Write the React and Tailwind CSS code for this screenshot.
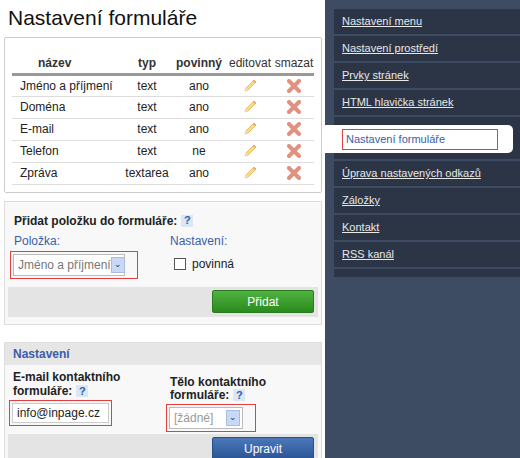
import React from "react";

const rows = [
  ["Jméno a příjmení", "text", "ano"],
  ["Doména", "text", "ano"],
  ["E-mail", "text", "ano"],
  ["Telefon", "text", "ne"],
  ["Zpráva", "textarea", "ano"],
];

const menu = ["Nastavení menu", "Nastavení prostředí", "Prvky stránek", "HTML hlavička stránek"];
const menu2 = ["Úprava nastavených odkazů", "Záložky", "Kontakt", "RSS kanál"];

function Pencil() {
  return (
    <svg width="16" height="16" viewBox="0 0 16 16">
      <path d="M3 13 L4 10 L12 2 L14 4 L6 12 Z" fill="#f7dc8a" stroke="#e0b050" strokeWidth="0.8" />
      <path d="M12 2 L14 4 L13 5 L11 3 Z" fill="#f0a070" />
      <path d="M3 13 L4 10 L6 12 Z" fill="#f3e6c8" />
    </svg>
  );
}

function Cross() {
  return (
    <svg width="14" height="14" viewBox="0 0 14 14">
      <path d="M2 2 L12 12 M12 2 L2 12" stroke="#e0917f" strokeWidth="4" strokeLinecap="round" />
    </svg>
  );
}

function Help() {
  return (
    <span className="inline-flex items-center justify-center w-[12px] h-[12px] bg-[#dde6f3] text-[#2b5fb4] text-[11px] font-bold ml-1 leading-none">?</span>
  );
}

function Select({ value, w, muted }) {
  return (
    <div className={`flex items-center justify-between bg-white border border-[#bbb] h-[22px] pl-1 pr-[2px] ${w}`}>
      <span className={`text-[12px] whitespace-nowrap ${muted ? "text-[#999]" : "text-[#777]"}`}>{value}</span>
      <span className="w-[14px] h-[16px] shrink-0 bg-[#c8d8f5] border border-[#a8bce0] flex items-center justify-center text-[#333] text-[9px]">⌄</span>
    </div>
  );
}

export default function App() {
  return (
    <div className="w-[520px] h-[458px] flex bg-white overflow-hidden" style={{ fontFamily: "'Liberation Sans', Arial, sans-serif" }}>
      <div className="w-[325px] shrink-0 pl-[4px] pr-[3px]">
        <h1 className="text-[21px] text-[#111] pl-[4px] pt-[5px] h-[37px] leading-[26px]">Nastavení formuláře</h1>

        <div className="border border-[#ccc] rounded-[2px] px-[7px] pt-[16px] pb-[7px]">
          <table className="w-full text-[12px] text-[#222]">
            <thead>
              <tr className="border-b-[3px] border-[#999] h-[20px]">
                <th className="font-bold text-[#333] text-left pl-[26px] w-[110px]">název</th>
                <th className="font-bold text-[#333] w-[50px]">typ</th>
                <th className="font-bold text-[#333] w-[54px]">povinný</th>
                <th className="font-normal text-[#333] w-[48px]">editovat</th>
                <th className="font-normal text-[#333]">smazat</th>
              </tr>
            </thead>
            <tbody>
              {rows.map((r) => (
                <tr key={r[0]} className="border-b border-[#ddd] h-[22px]">
                  <td className="pl-[8px] whitespace-nowrap">{r[0]}</td>
                  <td className="text-center">{r[1]}</td>
                  <td className="text-center">{r[2]}</td>
                  <td><div className="flex justify-center"><Pencil /></div></td>
                  <td><div className="flex justify-center"><Cross /></div></td>
                </tr>
              ))}
            </tbody>
          </table>
        </div>

        <div className="mt-[8px] border border-[#ddd] bg-[#f8f8f8] px-[3px] pt-[10px] pb-[7px]">
          <div className="text-[12px] font-bold text-[#222] pl-[6px] flex items-center">Přidat položku do formuláře:<Help /></div>
          <div className="flex mt-[2px]">
            <div className="w-[162px] pl-[6px]">
              <div className="text-[12px] text-[#3a5da8]">Položka:</div>
              <div className="mt-[1px] -ml-[4px] border border-[#e04040] w-[128px] p-[2px]">
                <Select value="Jméno a příjmení" w="w-[112px]" />
              </div>
            </div>
            <div>
              <div className="text-[12px] text-[#3a5da8]">Nastavení:</div>
              <div className="flex items-center gap-[6px] mt-[5px] ml-[4px]">
                <span className="w-[12px] h-[12px] border border-[#555] bg-white" />
                <span className="text-[12px] text-[#222]">povinná</span>
              </div>
            </div>
          </div>
          <div className="mt-[8px] bg-[#e4e4e4] h-[30px] flex justify-end items-center pr-[4px]">
            <button className="w-[102px] h-[23px] rounded-[2px] bg-gradient-to-b from-[#4fb240] to-[#2a8a1c] text-white text-[12px] border border-[#2a7a20]">Přidat</button>
          </div>
        </div>

        <div className="mt-[17px] border border-[#ddd] bg-[#f8f8f8] px-[3px] pb-[7px]">
          <div className="-mx-[3px] bg-[#e6e6e6] h-[22px] flex items-center pl-[8px] text-[12px] font-bold text-[#3a5da8]">Nastavení</div>
          <div className="flex mt-[5px]">
            <div className="w-[162px] pl-[5px]">
              <div className="text-[12px] font-bold text-[#222] leading-[14px]">E-mail kontaktního<br />formuláře:<Help /></div>
              <div className="mt-[2px] -ml-[4px] border border-[#e04040] w-[103px] p-[2px]">
                <div className="bg-white border border-[#ccc] h-[20px] pl-[4px] text-[12px] text-[#222] leading-[18px]">info@inpage.cz</div>
              </div>
            </div>
            <div className="pt-[6px]">
              <div className="text-[12px] font-bold text-[#222] leading-[13px]">Tělo kontaktního<br />formuláře:<Help /></div>
              <div className="mt-[2px] -ml-[4px] border border-[#e04040] w-[90px] p-[2px]">
                <Select value="[žádné]" w="w-[74px]" muted />
              </div>
            </div>
          </div>
          <div className="mt-[2px] bg-[#e4e4e4] h-[30px] flex justify-end items-center pr-[4px]">
            <button className="w-[102px] h-[23px] rounded-[2px] bg-gradient-to-b from-[#4a78b8] to-[#2a5597] text-white text-[12px] border border-[#2a4f88]">Upravit</button>
          </div>
        </div>
      </div>

      <div className="flex-1 bg-[#3e4c63] pt-[7px]">
        <div className="ml-[9px] bg-[#2b3546] w-[186px] border-t-[2px] border-[#3e4c63]">
          {menu.map((m) => (
            <div key={m} className="h-[27px] border-b-[2px] border-[#3e4c63] flex items-center pl-[8px]">
              <a className="text-[11px] text-[#e8e8e8] underline">{m}</a>
            </div>
          ))}
          <div className="h-[8px]" />
          <div className="-ml-[9px] h-[28px] bg-white rounded-r-[5px] w-[188px] flex items-center pl-[17px]">
            <div className="border border-[#e04040] w-[156px] h-[21px] flex items-center pl-[3px] text-[11px] text-[#3a5da8]">Nastavení formuláře</div>
          </div>
          <div className="h-[8px] border-b-[2px] border-[#3e4c63]" />
          {menu2.map((m) => (
            <div key={m} className="h-[27px] border-b-[2px] border-[#3e4c63] flex items-center pl-[8px]">
              <a className="text-[11px] text-[#e8e8e8] underline">{m}</a>
            </div>
          ))}
          <div className="h-[8px]" />
        </div>
      </div>
    </div>
  );
}
